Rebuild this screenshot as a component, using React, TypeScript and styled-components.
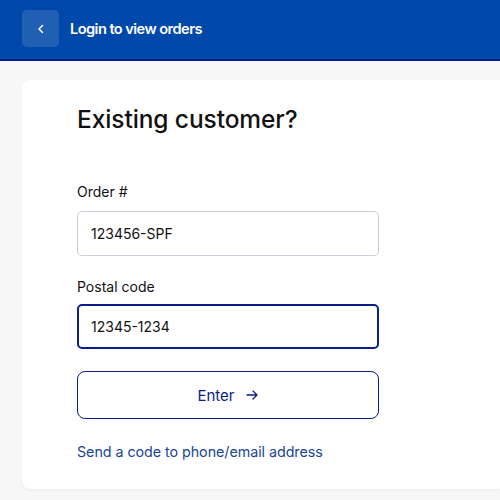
import React from "react";
import styled, { createGlobalStyle } from "styled-components";

const Global = createGlobalStyle`
  html, body { margin: 0; padding: 0; background: #f7f7f7; }
  body { font-family: Inter, "Noto Sans", sans-serif; -webkit-font-smoothing: antialiased; }
  * { box-sizing: border-box; }
`;

const Page = styled.div`
  width: 500px;
  height: 500px;
  overflow: hidden;
  background: #f7f7f7;
  display: flex;
  flex-direction: column;
`;

const Header = styled.header`
  height: 61px;
  flex: none;
  background: #0048aa;
  border-bottom: 2px solid #001c80;
  display: flex;
  align-items: center;
  padding: 0 0 2px 22px;
  gap: 11px;
`;

const BackButton = styled.button`
  width: 37px;
  height: 37px;
  border: none;
  border-radius: 5px;
  background: rgba(255, 255, 255, 0.13);
  display: flex;
  align-items: center;
  justify-content: center;
  padding: 0;
  cursor: pointer;
`;

const Title = styled.h1`
  margin: 0;
  color: #fff;
  font-size: 14.6px;
  font-weight: 600;
  letter-spacing: -0.55px;
`;

const Body = styled.main`
  padding: 19px 0 0 22px;
`;

const Card = styled.section`
  background: #fff;
  border-radius: 8px 0 0 8px;
  box-shadow: 0 1px 3px rgba(0, 0, 0, 0.05);
  height: 409px;
  padding: 24px 0 0 55px;
`;

const Heading = styled.h2`
  margin: 0 0 48px;
  font-size: 24.5px;
  line-height: 30px;
  font-weight: 500;
  color: #111;
  letter-spacing: -0.1px;
`;

const Field = styled.div<{ $gap: number }>`
  display: flex;
  flex-direction: column;
  width: 302px;
  margin-bottom: ${(p) => p.$gap}px;
`;

const Label = styled.label<{ $space: number }>`
  font-size: 14px;
  line-height: 20px;
  color: #111;
  margin-bottom: ${(p) => p.$space}px;
`;

const Input = styled.input<{ $focused?: boolean }>`
  height: 45px;
  border-radius: 5px;
  border: ${(p) => (p.$focused ? "2px solid #0a1e8c" : "1px solid #c9ceda")};
  padding: 0 ${(p) => (p.$focused ? 12 : 13)}px;
  font-family: inherit;
  font-size: 14px;
  color: #111;
  background: #fff;
  outline: none;
`;

const EnterButton = styled.button`
  width: 302px;
  height: 48px;
  border: 1.5px solid #0a1e8c;
  border-radius: 8px;
  background: #fff;
  color: #0a1e8c;
  font-family: inherit;
  font-size: 15px;
  font-weight: 400;
  display: flex;
  align-items: center;
  justify-content: center;
  gap: 10px;
  cursor: pointer;
  margin-bottom: 23px;
`;

const Link = styled.a`
  display: block;
  font-size: 14.3px;
  line-height: 20px;
  color: #1a4592;
  text-decoration: none;
  letter-spacing: -0.05px;
`;

export default function App() {
  return (
    <Page>
      <Global />
      <Header>
        <BackButton aria-label="Back">
          <svg width="12" height="12" viewBox="0 0 12 12" fill="none">
            <path d="M7.5 2.5L4 6l3.5 3.5" stroke="#fff" strokeWidth="1.5" strokeLinecap="round" strokeLinejoin="round" />
          </svg>
        </BackButton>
        <Title>Login to view orders</Title>
      </Header>
      <Body>
        <Card>
          <Heading>Existing customer?</Heading>
          <Field $gap={21}>
            <Label $space={9}>Order #</Label>
            <Input defaultValue="123456-SPF" />
          </Field>
          <Field $gap={22}>
            <Label $space={7}>Postal code</Label>
            <Input $focused defaultValue="12345-1234" />
          </Field>
          <EnterButton>
            Enter
            <svg width="14" height="14" viewBox="0 0 14 14" fill="none">
              <path d="M2 7h10M8 3l4 4-4 4" stroke="#0a1e8c" strokeWidth="1.3" strokeLinecap="round" strokeLinejoin="round" />
            </svg>
          </EnterButton>
          <Link href="#">Send a code to phone/email address</Link>
        </Card>
      </Body>
    </Page>
  );
}
